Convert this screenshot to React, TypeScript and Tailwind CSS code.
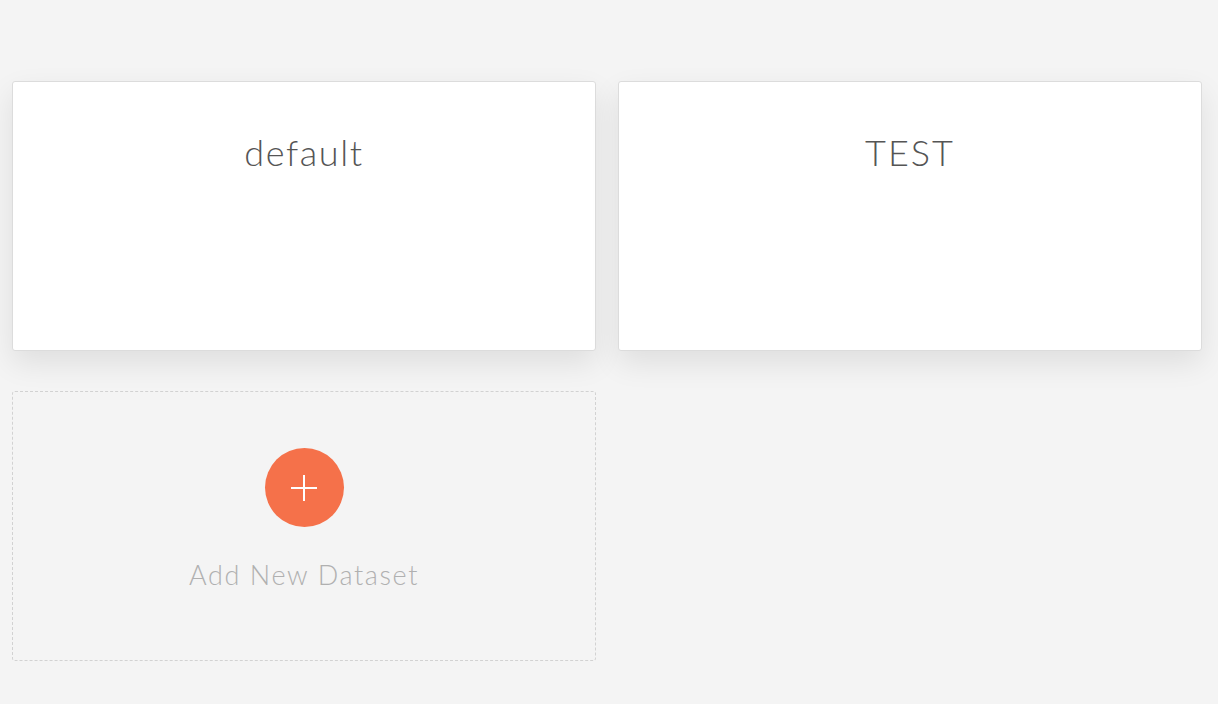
import React from "react";

export default function App() {
  return (
    <div className="min-h-[704px] w-full bg-[#f4f4f4] px-[12px] pt-[81px]" style={{ fontFamily: "Lato, 'Open Sans', sans-serif" }}>
      <div className="grid grid-cols-[584px_584px] gap-x-[22px] gap-y-[40px]">
        <div className="h-[270px] rounded-[3px] border border-[#dcdcdc] bg-white shadow-[0_12px_30px_rgba(0,0,0,0.09)] flex justify-center pt-[46px]">
          <span className="text-[36px] leading-[48px] font-light tracking-[1.6px] text-[#555]">default</span>
        </div>
        <div className="h-[270px] rounded-[3px] border border-[#dcdcdc] bg-white shadow-[0_12px_30px_rgba(0,0,0,0.09)] flex justify-center pt-[46px]">
          <span className="text-[36px] leading-[48px] font-light tracking-[2px] text-[#555]">TEST</span>
        </div>
        <div className="h-[270px] rounded-[3px] border border-dashed border-[#d2d2d2] flex flex-col items-center pt-[56px]">
          <div className="flex h-[79px] w-[79px] items-center justify-center rounded-full bg-[#f5714a]">
            <svg width="28" height="28" viewBox="0 0 28 28">
              <line x1="14" y1="1" x2="14" y2="27" stroke="white" strokeWidth="2" />
              <line x1="1" y1="14" x2="27" y2="14" stroke="white" strokeWidth="2" />
            </svg>
          </div>
          <span className="mt-[28px] text-[27px] leading-[40px] font-light tracking-[1.6px] text-[#b0b0b0]">Add New Dataset</span>
        </div>
      </div>
    </div>
  );
}
